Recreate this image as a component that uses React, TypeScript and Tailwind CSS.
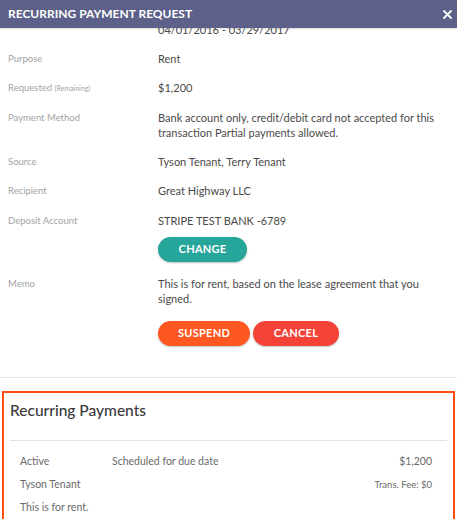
import React from "react";

const rows: { label: React.ReactNode; value: React.ReactNode }[] = [
  {
    label: "Purpose",
    value: "Rent",
  },
  {
    label: (
      <>
        Requested <span className="text-[7px]">(Remaining)</span>
      </>
    ),
    value: "$1,200",
  },
  {
    label: "Payment Method",
    value: "Bank account only, credit/debit card not accepted for this transaction Partial payments allowed.",
  },
  { label: "Source", value: "Tyson Tenant, Terry Tenant" },
  { label: "Recipient", value: "Great Highway LLC" },
];

function Row({ label, value, children }: { label: React.ReactNode; value: React.ReactNode; children?: React.ReactNode }) {
  return (
    <div className="flex pb-[14px]">
      <div className="w-[150px] shrink-0 pl-2 text-[9.5px] leading-[15px] text-[#a3a3a3]">{label}</div>
      <div className="flex-1 pl-2 pr-[20px]">
        <div className="text-[11px] leading-[15px] text-[#4a4a4a]">{value}</div>
        {children}
      </div>
    </div>
  );
}

function Pill({ color, children, className = "" }: { color: string; children: React.ReactNode; className?: string }) {
  return (
    <button
      className={`h-[25px] rounded-full text-[11px] font-bold tracking-wide text-white shadow-[0_1px_2px_rgba(0,0,0,0.25)] ${color} ${className}`}
    >
      {children}
    </button>
  );
}

export default function App() {
  return (
    <div className="w-[457px] h-[519px] overflow-hidden bg-white" style={{ fontFamily: "Lato, 'Open Sans', sans-serif" }}>
      <div className="relative z-10 flex h-[28px] items-center justify-between bg-[#5d6088] pl-2 pr-[5px] shadow-[0_1px_2px_rgba(0,0,0,0.15)]">
        <span className="text-[12px] font-bold text-white">RECURRING PAYMENT REQUEST</span>
        <svg width="9" height="9" viewBox="0 0 9 9">
          <path d="M1 1L8 8M8 1L1 8" stroke="white" strokeWidth="1.8" strokeLinecap="round" />
        </svg>
      </div>

      <div className="-mt-[6px]">
        <Row label="" value="04/01/2016 - 03/29/2017" />
        {rows.map((r, i) => (
          <Row key={i} label={r.label} value={r.value} />
        ))}
        <div className="mt-[1px]">
          <Row label="Deposit Account" value="STRIPE TEST BANK -6789">
            <Pill color="bg-[#26a69a]" className="mt-[9px] w-[89px]">
              CHANGE
            </Pill>
          </Row>
        </div>
        <Row label="Memo" value="This is for rent, based on the lease agreement that you signed.">
          <div className="mt-[15px] flex gap-[3px]">
            <Pill color="bg-[#ff5722]" className="w-[92px]">
              SUSPEND
            </Pill>
            <Pill color="bg-[#f44336]" className="w-[86px]">
              CANCEL
            </Pill>
          </div>
        </Row>
      </div>

      <div className="mt-[17px] border-t border-[#e8e8e8]" />

      <div className="mx-[2px] mt-[13px] h-[130px] border-2 border-[#ff4e12] px-[6px]">
        <h2 className="pt-[6px] pb-[19px] text-[15.5px] font-medium leading-[22px] text-[#3a3a3a]">Recurring Payments</h2>
        <div className="border-t border-[#e3e3e3]" />
        <div className="pl-[10px] pr-[15px] pt-[13px] text-[10.5px] text-[#6a6a6a]">
          <div className="flex items-center leading-[15px]">
            <span className="w-[92px]">Active</span>
            <span className="flex-1">Scheduled for due date</span>
            <span>$1,200</span>
          </div>
          <div className="mt-[8px] flex items-center justify-between leading-[15px]">
            <span>Tyson Tenant</span>
            <span className="text-[9.5px]">Trans. Fee: $0</span>
          </div>
          <div className="mt-[8px] leading-[15px]">This is for rent.</div>
        </div>
      </div>
    </div>
  );
}
